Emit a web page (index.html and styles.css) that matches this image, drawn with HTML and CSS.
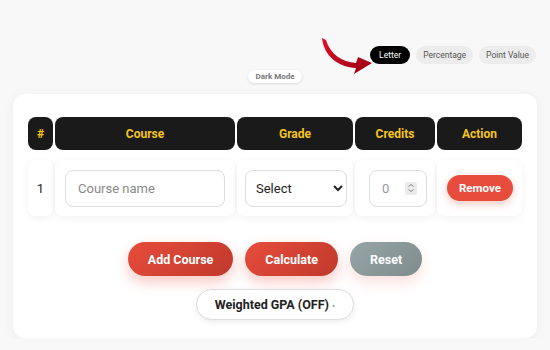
FILE: index.html
```html
<!DOCTYPE html>
<html lang="en">
<head>
  <meta charset="UTF-8">
  <meta name="viewport" content="width=device-width, initial-scale=1.0">
  <title>GPA Calculator</title>
  <link rel="stylesheet" href="styles.css">
</head>
<body>
  <!-- Grade mode switch -->
  <div class="mode-bar">
    <svg class="hint-arrow" width="58" height="42" viewBox="0 0 58 42">
      <defs>
        <linearGradient id="arrowFill" x1="0" y1="0" x2="1" y2="1">
          <stop offset="0" stop-color="#e0102a"/>
          <stop offset="1" stop-color="#9a0010"/>
        </linearGradient>
      </defs>
      <path d="M4,4 C6,22 20,33 38,34 L36,40 L54,29 L40,23 L38,29 C24,28 12,20 8,6 Z" fill="url(#arrowFill)"/>
    </svg>
    <button class="pill active">Letter</button>
    <button class="pill">Percentage</button>
    <button class="pill">Point Value</button>
  </div>

  <div class="theme-row">
    <button class="theme-btn">Dark Mode</button>
  </div>

  <div class="card">
    <table class="courses">
      <thead>
        <tr>
          <th class="col-num">#</th>
          <th class="col-course">Course</th>
          <th class="col-grade">Grade</th>
          <th class="col-credits">Credits</th>
          <th class="col-action">Action</th>
        </tr>
      </thead>
      <tbody>
        <tr>
          <td class="num">1</td>
          <td><input class="field course-input" type="text" placeholder="Course name"></td>
          <td>
            <select class="field grade-select">
              <option>Select</option>
              <option>A</option>
              <option>B</option>
              <option>C</option>
            </select>
          </td>
          <td>
            <div class="field num-box">
              <span class="num-value">0</span>
              <span class="spinner">
                <svg width="8" height="10" viewBox="0 0 8 10">
                  <path d="M1.5,3.5 L4,1.5 L6.5,3.5 M1.5,6.5 L4,8.5 L6.5,6.5" fill="none" stroke="#888" stroke-width="1"/>
                </svg>
              </span>
            </div>
          </td>
          <td><button class="btn-remove">Remove</button></td>
        </tr>
      </tbody>
    </table>

    <div class="actions">
      <button class="btn btn-red">Add Course</button>
      <button class="btn btn-red">Calculate</button>
      <button class="btn btn-gray">Reset</button>
    </div>

    <div class="weight-row">
      <button class="weight-btn">Weighted GPA (OFF) <span class="dot">&bull;</span></button>
    </div>
  </div>
</body>
</html>
```

FILE: styles.css
```css
body {
  font-family: Roboto, "Noto Sans", sans-serif;
  background-color: #f8f8f8;
  color: #222;
  margin: 0;
  padding: 0;
}
button {
  font-family: inherit;
  cursor: pointer;
}
.mode-bar {
  position: relative;
  display: flex;
  justify-content: flex-end;
  gap: 6px;
  padding: 46px 14px 0 0;
}
.hint-arrow {
  position: absolute;
  left: 318px;
  top: 34px;
}
.pill {
  height: 18px;
  padding: 0 7px;
  border: none;
  border-radius: 9px;
  background: #ececec;
  color: #555;
  font-size: 8.5px;
}
.pill.active {
  padding: 0 9px;
  background: #000;
  color: #fff;
}
.theme-row {
  display: flex;
  justify-content: center;
  margin-top: 6px;
}
.theme-btn {
  height: 13px;
  padding: 0 7px;
  border: none;
  border-radius: 7px;
  background: #fff;
  color: #777;
  font-size: 8px;
  font-weight: 700;
  line-height: 13px;
  box-shadow: 0 1px 3px rgba(0, 0, 0, 0.12);
}
.card {
  margin: 11px 13px 0;
  padding: 13px 13px 18px;
  background: #fff;
  border-radius: 12px;
  box-shadow: 0 2px 12px rgba(0, 0, 0, 0.05);
}
.courses {
  width: 498px;
  table-layout: fixed;
  border-collapse: separate;
  border-spacing: 2px 10px;
}
.courses th {
  height: 33px;
  padding: 0;
  background: #1a1a1a;
  color: #f5c518;
  font-size: 12px;
  font-weight: 700;
  border-radius: 8px;
}
.col-num { width: 25px; }
.col-course { width: 180px; }
.col-grade { width: 116px; }
.col-credits { width: 80px; }
.col-action { width: 85px; }
.courses td {
  height: 56px;
  padding: 0 10px;
  background: #fff;
  border-radius: 8px;
  box-shadow: 0 2px 8px rgba(0, 0, 0, 0.06);
  text-align: center;
}
.courses td.num {
  padding: 0;
  color: #222;
  font-size: 13px;
}
.field {
  box-sizing: border-box;
  height: 37px;
  border: 1px solid #ddd;
  border-radius: 8px;
  background: #fff;
  font-family: inherit;
  font-size: 13px;
  color: #222;
}
.course-input {
  width: 100%;
  padding: 0 12px;
}
.course-input::placeholder {
  color: #888;
}
.grade-select {
  width: 102px;
  margin-left: -2px;
  padding: 0 6px;
}
.num-box {
  display: inline-flex;
  align-items: center;
  justify-content: space-between;
  width: 58px;
  margin-left: 4px;
  padding: 0 9px 0 12px;
}
.num-value {
  color: #999;
}
.spinner {
  display: flex;
  align-items: center;
  justify-content: center;
  width: 12px;
  height: 13px;
  background: #ebebeb;
  border-radius: 2px;
}
.btn-remove {
  height: 26px;
  padding: 0 12px;
  border: none;
  border-radius: 13px;
  background: #e74c3c;
  color: #fff;
  font-size: 11.5px;
  font-weight: 700;
  box-shadow: 0 3px 8px rgba(231, 76, 60, 0.3);
}
.actions {
  display: flex;
  justify-content: center;
  gap: 12px;
  margin-top: 16px;
}
.btn {
  height: 34px;
  padding: 0 20px;
  border: none;
  border-radius: 17px;
  color: #fff;
  font-size: 12.5px;
  font-weight: 700;
}
.btn-red {
  background: linear-gradient(135deg, #e74c3c, #c0392b);
  box-shadow: 0 6px 14px rgba(231, 76, 60, 0.3);
}
.btn-gray {
  background: linear-gradient(135deg, #95a5a6, #7f8c8d);
  box-shadow: 0 6px 14px rgba(231, 76, 60, 0.18);
}
.weight-row {
  display: flex;
  justify-content: center;
  margin-top: 13px;
}
.weight-btn {
  height: 31px;
  padding: 0 18px;
  border: 1px solid #ddd;
  border-radius: 16px;
  background: #fff;
  color: #222;
  font-size: 12.5px;
  font-weight: 700;
  box-shadow: 0 2px 6px rgba(0, 0, 0, 0.08);
}
.dot {
  color: #aaa;
  font-size: 9px;
}
```
